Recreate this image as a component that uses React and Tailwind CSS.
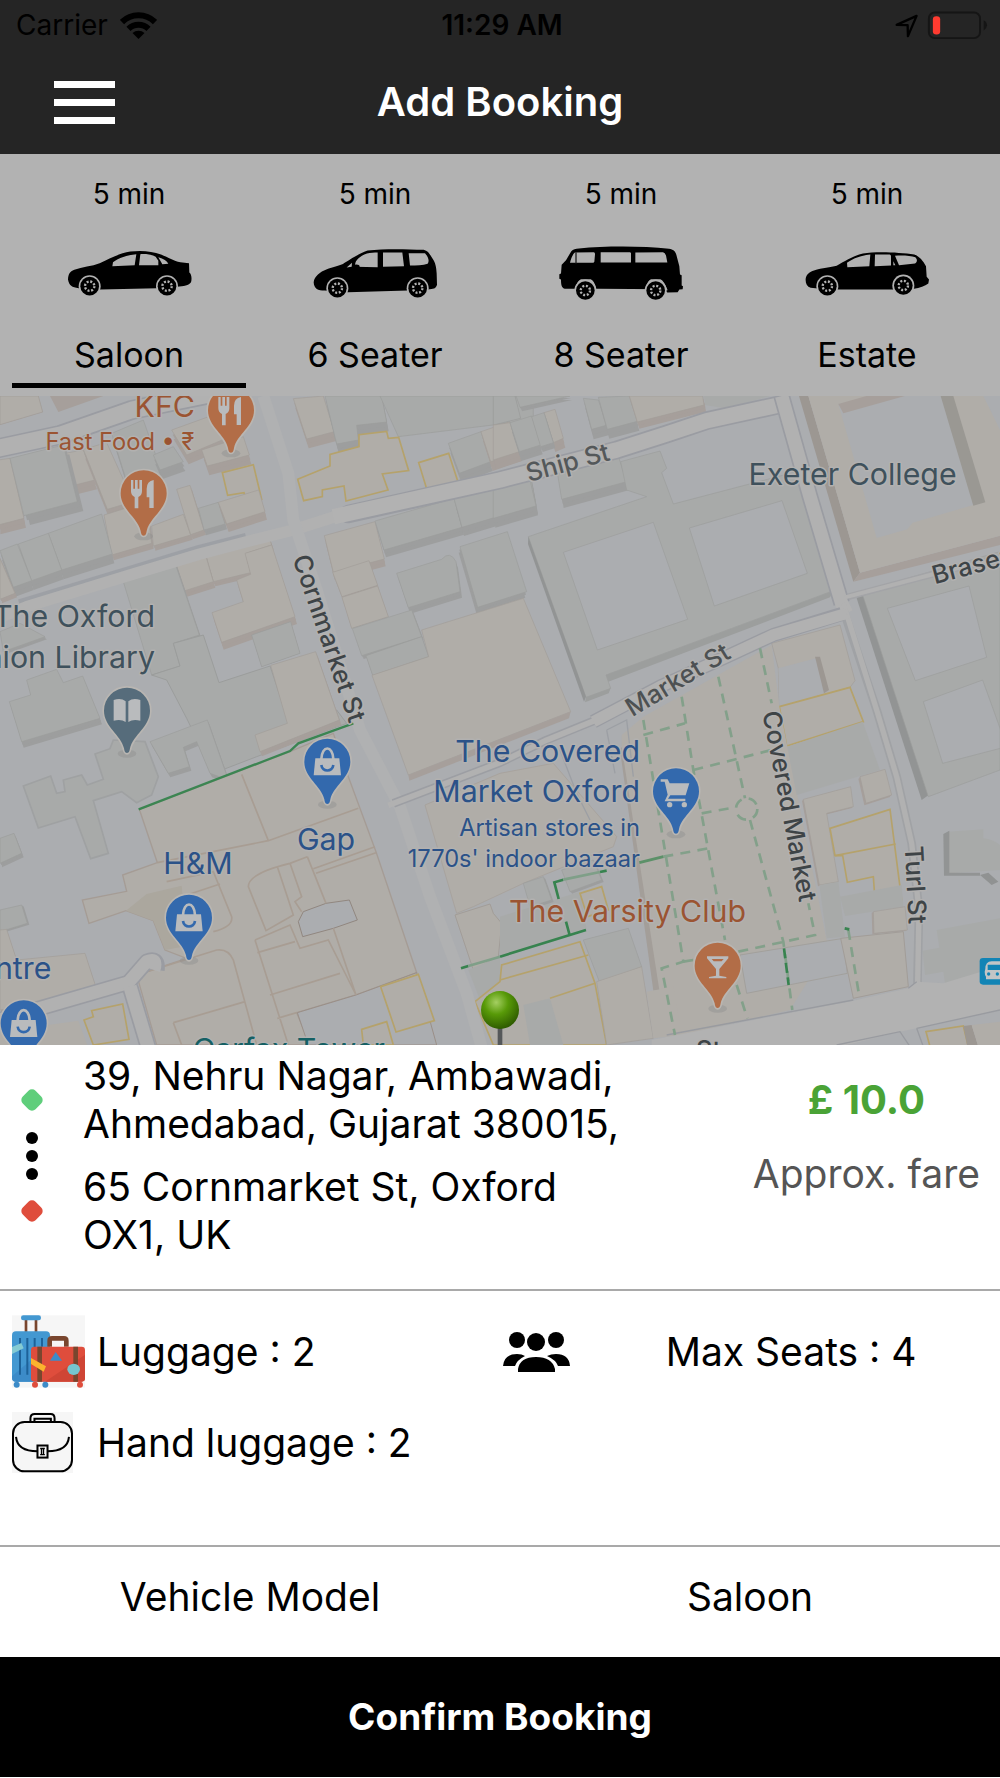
import React, { useState } from "react";

const GREY = "#a8aaa9";
const BEIGE = "#b0ada8";
const GROUND = "#abadb0";

/* ---------- vehicles ---------- */

function Wheel({ x, y }) {
  return (
    <g>
      <circle cx={x} cy={y} r="33" fill="#b2b2b2" />
      <circle cx={x} cy={y} r="28" fill="#000" />
      <circle cx={x} cy={y} r="14" fill="none" stroke="#b2b2b2" strokeWidth="7" strokeDasharray="6 5" />
    </g>
  );
}

const GLASS = "#b2b2b2";

function SaloonCar() {
  return (
    <svg viewBox="200 255 375 170" className="h-[57px] w-[125px]" aria-hidden="true">
      <path d="M203 358C204 342 208 334 222 329C245 320 275 318 298 309C325 298 355 279 390 274C425 270 455 273 482 283C505 292 520 303 540 306L566 309L567 337C574 342 575 357 572 366C566 376 550 377 530 380L470 384L300 388L235 384C215 382 206 376 203 358Z" />
      <path d="M336 318L338 306C355 293 380 284 408 282L403 315ZM416 315L420 282C440 281 455 284 466 290L474 302L474 315ZM474 291C490 296 500 302 504 311L486 312Z" fill={GLASS} />
      <Wheel x="268" y="378" />
      <Wheel x="500" y="378" />
    </svg>
  );
}

function SixSeater() {
  return (
    <svg viewBox="940 255 375 170" className="h-[57px] w-[125px]" aria-hidden="true">
      <path d="M942 366C944 348 962 335 980 328C1000 320 1022 318 1035 308C1060 292 1085 277 1104 271C1155 265 1220 267 1272 269C1286 272 1291 284 1298 294C1308 308 1310 322 1311 340L1312 374C1309 386 1300 387 1285 388L1225 391L1045 396L975 391C955 391 943 386 942 366Z" />
      <path d="M1067 320C1062 300 1085 286 1102 280C1112 277 1124 277 1134 277L1134 321ZM1041 322L1057 308L1056 320ZM1150 277L1208 277L1213 318L1150 320ZM1227 279L1276 279C1286 290 1290 303 1284 311C1270 316 1250 316 1231 316Z" fill={GLASS} />
      <ellipse cx="1070" cy="320" rx="10" ry="7" />
      <Wheel x="1013" y="384" />
      <Wheel x="1254" y="384" />
    </svg>
  );
}

function EightSeater() {
  return (
    <svg viewBox="180 255 375 170" className="h-[57px] w-[125px]" aria-hidden="true">
      <path d="M181 342L186 340L188 314L201 300L217 273C222 267 230 266 240 265C320 257 430 257 510 266C523 268 528 272 532 284L541 318L543 343L548 345L548 376L552 378L551 387L541 388L536 396L505 397L495 387L300 386L198 386C188 383 186 375 186 358L181 356Z" />
      <path d="M213 308C216 294 222 281 228 277L284 276Q289 277 288 283L286 305Q286 308 281 308ZM305 276H393Q397 277 396 282V307H305ZM409 277L492 276Q498 277 501 286L505 307H409Z" fill={GLASS} />
      <path d="M231 276V310" stroke="#222" strokeWidth="4" />
      <path d="M228 385Q236 360 246 357H275Q285 360 292 385ZM440 385Q446 360 456 357H484Q494 360 506 390Z" fill={GLASS} />
      <Wheel x="259" y="391" />
      <Wheel x="470" y="391" />
    </svg>
  );
}

function EstateCar() {
  return (
    <svg viewBox="918 255 375 170" className="h-[57px] w-[125px]" aria-hidden="true">
      <path d="M920 356C922 342 932 335 945 331C970 323 995 322 1013 317C1035 304 1065 286 1092 280C1130 273 1200 276 1246 283C1262 289 1272 302 1281 318L1283 350L1290 358L1288 370C1278 378 1262 383 1245 386L1200 388H985L935 383C924 380 919 370 920 356Z" />
      <path d="M1045 321L1044 308C1062 294 1090 285 1114 283L1111 318ZM1128 283H1172Q1176 284 1176 288V316L1127 318ZM1188 287C1210 285 1235 287 1249 291C1256 298 1255 306 1248 310L1200 315ZM1183 303L1189 315H1183Z" fill={GLASS} />
      <Wheel x="985" y="378" />
      <Wheel x="1213" y="376" />
    </svg>
  );
}

const VEHICLES = [
  { name: "Saloon", Icon: SaloonCar },
  { name: "6 Seater", Icon: SixSeater },
  { name: "8 Seater", Icon: EightSeater },
  { name: "Estate", Icon: EstateCar },
];

/* ---------- map ---------- */

// A building: roof polygon plus a darker extruded side.
function Block({ d, c = GREY, dx = 6, dy = 28 }) {
  const side = c === GREY ? "#9d9e9e" : "#a69f9b";
  return (
    <g>
      <path d={d} transform={`translate(${dx} ${dy})`} fill={side} />
      <path d={d} transform={`translate(${dx / 2} ${dy / 2})`} fill={side} />
      <path d={d} fill={c} stroke={c === GREY ? "#9b9d9c" : "#a29d98"} strokeWidth="2" />
    </g>
  );
}

function Shop({ d }) {
  return <path d={d} fill={BEIGE} stroke="#b5a26b" strokeWidth="5" />;
}

function Pin({ x, y, color, children }) {
  return (
    <g transform={`translate(${x} ${y})`}>
      <ellipse cx="0" cy="2" rx="28" ry="12" fill="#8c8c8c" opacity="0.4" />
      <path
        d="M0 0C-7 0-8-8-9-14C-18-55-69-78-69-127A69 69 0 1 1 69-127C69-78 18-55 9-14C8-8 7 0 0 0Z"
        fill={color}
        stroke="#b9b6b2"
        strokeWidth="10"
        paintOrder="stroke"
      />
      <g transform="translate(0 -127)" fill="#b9bbbd">{children}</g>
    </g>
  );
}

const Fork = () => (
  <g>
    <path d="M-38-40h7v26h5v-26h8v26h5v-26h8v34q0 12-11 17v34h-11V11q-11-5-11-17z" />
    <path d="M30-40v84H17V12H9V-14q0-22 21-26z" />
  </g>
);

const Bag = () => (
  <g>
    <path d="M-36-10H36L41 41H-41Z" />
    <path d="M-18-8C-16-50 16-50 18-8" fill="none" stroke="#b9bbbd" strokeWidth="8" />
    <path d="M-18 10C-15 32 15 32 18 10" fill="none" stroke="#3369ad" strokeWidth="8" />
  </g>
);

const Label = ({ x, y, size = 91, weight = 400, fill = "#2b5288", anchor = "end", rotate = 0, children }) => (
  <text
    x={x}
    y={y}
    fontSize={size}
    fontWeight={weight}
    fill={fill}
    textAnchor={anchor}
    transform={`rotate(${rotate} ${x} ${y})`}
    stroke="#b2b1b0"
    strokeWidth="9"
    strokeLinejoin="round"
    paintOrder="stroke"
  >
    {children}
  </text>
);

const Street = (props) => <Label size={76} weight={500} anchor="start" fill="#3e4447" {...props} />;

function CityMap() {
  return (
    <svg
      viewBox="0 18 3000 1947"
      preserveAspectRatio="xMidYMid slice"
      className="block h-[649px] w-full"
      role="img"
      aria-label="Map of Oxford city centre"
    >
      <defs>
        <radialGradient id="ball" cx="0.4" cy="0.3" r="0.7">
          <stop offset="0" stopColor="#a5cf62" />
          <stop offset="0.45" stopColor="#589a08" />
          <stop offset="1" stopColor="#2f5c00" />
        </radialGradient>
      </defs>
      <rect x="-500" y="-500" width="4000" height="3000" fill={GROUND} />

      {/* north-west */}
      <Block c={BEIGE} d="M0 18H115L128 66L0 104Z" dy={0} dx={0} />
      <path d="M150 18H310L175 66Z" fill="#a69f9b" />
      <Block c={BEIGE} d="M-5 210L30 205L72 385L-5 405Z" />
      <Block c={BEIGE} d="M195 190L250 180L285 270L225 285Z" />
      <Block d="M30 205L190 165L232 335L72 377Z" dx={18} />
      <Block c={BEIGE} d="M250 178L320 158L400 335L322 358Z" />
      <Block d="M335 130L430 90L490 260L385 290Z" />
      <Block d="M460 195L520 170L550 215L480 240Z" />
      <Block c={BEIGE} d="M515 120L640 75L690 140L560 195Z" />
      <Block c={BEIGE} d="M605 180L730 140L748 195L622 228Z" />
      <Shop d="M667 248L760 224L785 328L740 340L732 308L683 316Z" />
      <Block c={BEIGE} d="M312 375L440 335L455 460L335 495Z" dy={16} />
      <Block c={BEIGE} d="M455 408L550 373L572 435L460 468Z" dy={14} />
      <Block c={BEIGE} d="M530 298L570 286L612 420L572 434Z" dy={14} />
      <Block d="M595 355L655 337L675 402L612 420Z" dy={16} />
      <Block c={BEIGE} d="M655 337L776 300L795 365L680 402Z" dy={24} />
      <Block d="M145 430L305 372L337 492L185 540Z" />
      <Block d="M55 462L145 430L185 540L95 572Z" />
      <Block d="M0 482L52 462L95 572L40 592Z" />
      <Block c={BEIGE} d="M0 505L45 610L0 628Z" dy={12} />

      {/* north centre */}
      <Block c={BEIGE} d="M880 26L970 18L1003 125L920 147Z" />
      <Block d="M975 18H1145L1160 96L1070 106L1075 150L1010 162Z" />
      <path d="M1140 18H1600V90L1195 140Z" fill={GREY} stroke="#9b9d9c" strokeWidth="2" />
      <Shop d="M893 268L990 228V193L1077 170V134L1160 124L1165 145L1196 142L1226 242L1147 252L1164 300L1038 333L1032 288L967 300V320L911 332Z" />
      <Block d="M1345 160L1443 125L1472 215L1378 250Z" />
      <Block c={BEIGE} d="M1443 125L1530 95L1560 185L1472 215Z" />
      <Shop d="M1256 218L1346 190L1376 282L1284 310Z" />

      {/* south of Ship Street */}
      <Block c={BEIGE} d="M973 437L1125 395L1153 507L1000 547Z" dx={4} dy={22} />
      <Block d="M1125 393L1362 325L1386 412L1152 480Z" dy={22} />
      <Block d="M1362 325L1592 258L1608 345L1386 412Z" dy={26} />
      <Block c={BEIGE} d="M998 547L1107 512L1133 586L1026 620Z" dx={3} dy={10} />
      <Block c={BEIGE} d="M1026 622L1133 588L1165 680L1055 715Z" dx={0} dy={0} />
      <Block d="M1190 550L1325 508Q1350 480 1368 515L1380 605L1225 653Z" dy={18} />
      <Block d="M1380 470L1522 425L1580 605L1433 652Z" dx={-4} dy={18} />
      <Block d="M1057 716L1235 660L1265 740L1085 797Z" dy={10} />
      <Block d="M1098 797L1265 740L1286 800L1118 856Z" dx={0} dy={0} />
      <path d="M1265 720L1570 625L1712 965L1225 1155L1116 856L1286 800Z" fill={BEIGE} stroke="#a29d98" strokeWidth="2" />
      <path d="M1225 1155L1712 965L1707 985L1228 1172Z" fill="#a69f9b" />

      {/* library area */}
      <Block c={BEIGE} d="M615 485L802 427L815 465L738 490L752 548L722 555L640 575Z" dy={14} />
      <Block c={BEIGE} d="M527 520L615 490L640 575L555 602Z" dy={18} />
      <Block c={BEIGE} d="M735 490L815 465L885 680L665 757L636 668L730 635L710 570L752 553Z" dy={22} />
      <Block d="M370 575L527 525L598 735L520 760L540 828L455 855Z" dx={4} dy={4} />
      <Block d="M755 735L872 695L900 790L785 830Z" dx={0} dy={0} />
      <path d="M520 760L610 735L657 878L810 828L862 985L1010 960L1040 1000L770 1100L640 1150L560 985L500 870L455 855L540 828Z" fill={GREY} stroke="#9b9d9c" strokeWidth="3" />
      <Block c={BEIGE} d="M812 826L947 785L1018 990L780 1085L765 1035L862 1000Z" dy={14} />
      <Block d="M80 870L170 838L190 878L248 858L300 985L65 1055L28 935L92 915Z" dy={18} />
      <Block d="M0 725L60 700L135 740L10 785Z" dy={8} />
      <path d="M285 1092L330 1076L340 1050L435 1055L475 1160L455 1215L410 1238L365 1205L280 1232L325 1390L272 1406L225 1280L115 1314L70 1188L152 1158L170 1210L195 1205L190 1170L245 1155L262 1185L310 1168Z" fill={GREY} stroke="#9fa1a2" strokeWidth="5" />
      <Block d="M450 1055L622 990L685 1170L630 1150L590 1055L550 1072L568 1130L505 1150Z" dy={12} />
      <Block d="M0 1345L42 1330L65 1390L0 1420Z" dy={12} />
      <Block d="M0 1560L65 1545L82 1600L0 1625Z" dy={4} />
      <Block c={BEIGE} d="M0 1620L20 1618L50 1710L255 1690L290 1798L75 1850L0 1860Z" dy={20} />

      {/* shopping centre block */}
      <path
        d="M418 1258L870 1085L1000 1030L1045 1160L1128 1385L1250 1748L1068 1815L890 1868L930 1965H470L410 1755L560 1705L495 1680L460 1592L378 1562L267 1600L247 1530L380 1504L368 1455L472 1418Z"
        fill={BEIGE}
        stroke="#a59c95"
        strokeWidth="4"
      />
      <path d="M378 1562L440 1512L545 1487L555 1600L560 1668L495 1680L460 1592Z" fill="#aba79e" />
      <path d="M895 1595L910 1565L978 1540L1048 1530L1072 1590L1000 1615L908 1640Z" fill={GROUND} stroke="#918780" strokeWidth="3" />
      <path d="M892 1868L1068 1815L1250 1748L1310 1965H925Z" fill={GROUND} stroke="#9a8f88" strokeWidth="3" />
      <path
        d="M472 1418L805 1352L1075 1255M725 1153L805 1352M922 1400L870 1420Q745 1450 745 1490L798 1622L880 1575L862 1520L832 1430M870 1420L905 1520L885 1535L905 1565M940 1436L1125 1370M948 1450L1128 1388M922 1400L978 1540M500 1475L640 1445L695 1580Q700 1610 640 1625M545 1520L660 1482M765 1650L870 1605L900 1675L985 1650L1068 1815M765 1650L865 1965M772 1688L885 1655M810 1815L1020 1750M832 1885L890 1868M410 1755L650 1680Q685 1675 700 1710L770 1965M520 1898L735 1835M520 1898L545 1965M1000 1615L1068 1815"
        fill="none"
        stroke="#a89d93"
        strokeWidth="5"
      />
      <Shop d="M1142 1790L1255 1753L1303 1892L1188 1926Z" />
      <Shop d="M1085 1918L1160 1895L1180 1965H1090Z" />
      <Shop d="M252 1890L280 1880L275 1862L368 1842L387 1948L280 1965Z" />
      <path d="M0 1965V1925L235 1892L262 1965Z" fill={BEIGE} />

      {/* north-east */}
      <g transform="translate(1500 0)">
        <Block d="M-20 18H45L62 85L-20 105Z" dy={0} dx={0} />
        <Block d="M48 18H210L60 52Z" dy={12} />
        <Block c={BEIGE} d="M-20 105L30 98L58 185L-20 210Z" />
        <Block d="M30 98L95 78L122 165L58 185Z" />
        <Block c={BEIGE} d="M132 68L165 58L190 145L160 158Z" />
        <Block d="M95 80L132 68L160 158L122 170Z" dy={16} />
        <Block d="M250 25L295 30L322 105L275 118Z" dy={30} />
        <Block d="M295 22L388 18L412 94L322 118Z" />
        <Block c={BEIGE} d="M388 18H608L612 45L412 96Z" dy={20} />
        <path d="M612 18H810L675 55L615 45Z" fill={GREY} />
        <Block d="M-20 300L90 270L108 348L-20 385Z" />
        <Block d="M170 235L350 183L380 275L185 328Z" dy={26} />
        <path
          fillRule="evenodd"
          d="M85 440L440 320L380 300L362 215L480 183L500 235L485 248L520 342L890 245L1000 602L318 855L332 895L258 922ZM190 487L460 397L563 688L292 780ZM568 414L846 332L922 550L643 648Z"
          fill={GREY}
          stroke="#9b9d9c"
          strokeWidth="2"
        />
        <path d="M85 440L258 920L252 935L84 462Z" fill="#929494" />
        <path d="M318 855L1000 602L990 622L325 875ZM258 922L332 895L326 910L255 937Z" fill="#9c9e9d" />
        <path d="M897 18L1060 575L1080 548L925 18Z" fill="#9c9792" />
        <path d="M1060 575L1080 548L1500 437V465Z" fill="#a69f9b" />
        <path
          fillRule="evenodd"
          d="M925 18H1500V437L1080 548ZM1015 42L1210 0H1322L1420 345L1238 398L1222 418L1130 444Z"
          fill={BEIGE}
        />
        <path d="M1322 18H1360L1456 337L1420 347Z" fill="#9a9893" />
        <path d="M1015 42L1110 15H1225L1030 70Z" fill="#a69f9b" />
        <path d="M1450 18H1500V120Z" fill={GROUND} />
        <path d="M1070 625L1085 605L1300 1205L1265 1230Z" fill="#929494" />
        <path
          fillRule="evenodd"
          d="M1085 605L1500 485V1140L1285 1220ZM1162 655L1407 588L1460 802L1246 872ZM1270 935L1448 870L1520 1070L1328 1120Z"
          fill={GREY}
          stroke="#9b9d9c"
          strokeWidth="2"
        />
        <path d="M815 760L1020 705L1065 872L1050 892L838 950L835 835Z" fill={BEIGE} stroke="#a29d98" strokeWidth="2" />
        <path d="M835 835L948 805L985 905L838 950Z" fill={GROUND} />
        <path d="M945 800L960 800L987 900L972 910Z" fill="#9c9792" />
        <path d="M838 950L1050 892L1090 995L860 1068Z" fill={BEIGE} stroke="#b5a26b" strokeWidth="5" />
      </g>

      {/* covered market and south-east */}
      <g transform="translate(1500 960)">
        <path d="M365 75L430 20L815 -195L838 -10L985 715L870 900L545 975L470 870L365 110Z" fill={BEIGE} />
        <path d="M365 110L478 840L460 842L360 120Z" fill="#a39e99" />
        <path d="M720 735L1030 685L1042 790L740 850Z" fill={GROUND} stroke="#a2a09c" strokeWidth="3" />
        <path d="M862 110L1088 35L1140 180L890 255Z" fill={GREY} />
        <Block c={BEIGE} d="M1080 200L1155 178L1175 255L1098 280Z" dx={-5} dy={6} />
        <Block c={BEIGE} d="M910 268L1052 230L1060 290L980 310L1015 515L958 525Z" dx={-4} dy={4} />
        <Shop d="M990 355L1170 298L1205 570H1125L1120 500L1042 517L1028 437L1005 437Z" />
        <path d="M1005 437L1187 402" stroke="#b5a26b" strokeWidth="5" />
        <path d="M1020 560L1205 525L1210 590L1035 618Z" fill={GREY} />
        <path d="M958 525L1015 515L1035 680L980 685Z" fill={GREY} />
        <Block c={BEIGE} d="M1120 605L1215 590L1222 660L1122 670Z" dx={-5} dy={3} />
        <path d="M1022 685L1210 665L1225 830L1060 865Z" fill={BEIGE} stroke="#a29d98" strokeWidth="3" />
        <path d="M1345 365L1450 358V385Q1480 388 1500 405V480L1345 490Z" fill={GREY} />
        <path d="M1330 372L1348 362V488H1440V497H1332Z" fill="#929494" />
        <path d="M1440 495L1465 488L1495 515L1475 525Z" fill="#909292" />
        <path d="M1310 660L1500 625V780L1335 820L1330 785L1275 795L1268 722L1318 713Z" fill={GREY} />

        {/* west of the market */}
        <path d="M-225 285L0 190L160 160L350 380L340 410L70 520L-80 590L-130 610Z" fill={BEIGE} stroke="#a8a39e" strokeWidth="3" />
        <path d="M-135 615L-30 582L-20 610L5 640L-5 740L-80 780Z" fill={BEIGE} stroke="#a29d98" strokeWidth="3" />
        <path d="M0 620L240 545L260 660L0 740Z" fill={GREY} />
        <Block d="M70 520L130 500L155 570L90 590Z" dy={6} />
        <Block d="M185 480L280 450L305 510L210 545Z" dy={6} />
        <Shop d="M240 550L305 530L325 600L262 620Z" />
        <path d="M250 690L385 655L425 770L300 820Z" fill={GREY} stroke="#9b9d9c" strokeWidth="2" />
        <path d="M-95 780L0 740L0 870L-60 870Z" fill={GREY} />
        <Shop d="M-75 875L0 815L5 765L240 695L285 820L320 1005H-20Z" />
        <path d="M0 810L265 735M150 865L285 820" stroke="#b5a26b" strokeWidth="5" />
        <path d="M70 885L150 865L190 1005H90Z" fill={GREY} />
        <path d="M290 815L425 770L460 985L320 1005Z" fill={BEIGE} stroke="#a29d98" strokeWidth="2" />
        <path d="M440 845L520 830L545 975L460 985Z" fill={BEIGE} />
      </g>

      {/* roads */}
      <g fill="none" strokeLinejoin="round">
        <path d="M-30 180L180 135L395 60L640 10" stroke="#9a9ca2" strokeWidth="60" />
        <path d="M-30 180L180 135L395 60L640 10" stroke="#b1b1b1" strokeWidth="50" />
        <path d="M60 648L400 545L600 484L740 448" stroke="#9a9ca2" strokeWidth="40" opacity="0.8" />
        <path d="M-20 690L80 650L400 552L600 492L760 450L880 420L1030 372" stroke="#b1b1b1" strokeWidth="34" />
        <path d="M1045 372L1500 270L1850 180L2000 132L2120 92L2340 44" stroke="#9a9ca2" strokeWidth="56" strokeLinecap="round" />
        <path d="M1000 380L1500 270L1850 180L2000 132L2120 92L2340 44" stroke="#b2b2b2" strokeWidth="46" />
        <path d="M790 18L865 250L880 390L950 600L1080 1020L1200 1250L1290 1520L1400 1810L1450 1990" stroke="#b0b1b2" strokeWidth="36" />
        <path d="M2345 18L2430 320L2525 640" stroke="#9a9ca2" strokeWidth="50" />
        <path d="M2345 18L2430 320L2525 640L2540 670" stroke="#b1b1b1" strokeWidth="40" />
        <path d="M2530 660L2630 960L2690 1160L2735 1360L2757 1560L2752 1790" stroke="#a0a2a5" strokeWidth="26" />
        <path d="M2530 640L2630 960L2690 1160L2735 1360L2757 1560L2752 1830" stroke="#b1b1b1" strokeWidth="16" />
        <path d="M1800 985L1640 1050L1500 1118L1180 1240" stroke="#9c9ea3" strokeWidth="26" />
        <path d="M2525 672L2320 735L2180 800L1980 890L1780 995" stroke="#9a9ca2" strokeWidth="42" />
        <path d="M1800 985L1640 1050L1500 1118L1165 1246" stroke="#b1b1b1" strokeWidth="17" />
        <path d="M2540 670L2320 735L2180 800L1980 890L1780 995" stroke="#b1b1b1" strokeWidth="34" />
        <path d="M2545 620L2790 555L3010 500" stroke="#a3a4a7" strokeWidth="20" />
        <path d="M2535 622L2790 555L3010 500" stroke="#b1b1b1" strokeWidth="12" />
        <path d="M-20 1895L385 1778L440 1715Q475 1700 470 1740" stroke="#9a9ca2" strokeWidth="48" />
        <path d="M390 1790L450 1990" stroke="#9a9ca2" strokeWidth="50" />
        <path d="M-20 1895L385 1778L440 1715Q475 1700 462 1740" stroke="#b1b1b1" strokeWidth="38" />
        <path d="M390 1790L450 1990" stroke="#b1b1b1" strokeWidth="40" />
      </g>
      <g transform="translate(1500 960)">
        <path d="M455 990L1060 872L1225 835L1250 815L1330 820L1510 765V900L1200 965L1000 1015H455Z" fill="#b2b2b2" />
        <path d="M500 975L1060 870M1225 835L1250 815M1010 1005L1200 965L1230 1010M1250 955L1500 900M1250 955L1270 1010" stroke="#999ba0" strokeWidth="4" fill="none" />
        <path d="M320 60L380 30L400 200M320 60L345 190M180 120L230 250L270 330" stroke="#9c9fa4" strokeWidth="4" fill="none" />
        <Shop d="M1278 965L1390 948L1405 1010H1290Z" />
        <path d="M1390 948L1415 945L1435 1010H1402Z" fill="#9c9792" />
        <path d="M1415 945L1500 935V1010H1435Z" fill={BEIGE} />

        {/* arcades */}
        <g fill="none" stroke="#83a08a" strokeWidth="8" strokeDasharray="30 22">
          <path d="M430 30L550 755L485 775L525 975" />
          <path d="M545 -40L580 180L675 690" />
          <path d="M655 -100L735 265" />
          <path d="M780 -185L815 -20" />
          <path d="M750 330L850 695L877 900" />
          <path d="M430 75L555 40M580 180L815 120M605 310L705 292M490 440L625 415M715 725L945 675L925 580M550 755L580 750M1045 660L1078 860M710 825L742 925" />
          <circle cx="740" cy="297" r="32" />
        </g>
        <g fill="none" stroke="#37834f" strokeWidth="8">
          <path d="M0 740L258 660M208 672L198 635M176 567L163 517L190 509M300 486L320 482M-117 775L-95 768" />
          <path d="M-95 768L0 740M190 509L300 486" stroke="#7f9f88" />
          <path d="M418 458L490 440" stroke="#5c9169" />
          <path d="M852 715L866 825" strokeDasharray="30 14" />
          <path d="M1034 655L1048 658" />
        </g>
      </g>
      <path d="M416 1258L870 1083L895 1060L1000 1022L1060 1000" fill="none" stroke="#3c8552" strokeWidth="7" />

      {/* labels */}
      <Label x={585} y={81} fill="#9b5432">KFC</Label>
      <Label x={583} y={181} size={71} fill="#9b5432">Fast Food • ₹</Label>
      <Label x={465} y={712} fill="#3f515c">The Oxford</Label>
      <Label x={465} y={833} fill="#3f515c">Union Library</Label>
      <Label x={2870} y={284} fill="#3f515c">Exeter College</Label>
      <Label x={1920} y={1115}>The Covered</Label>
      <Label x={1920} y={1236}>Market Oxford</Label>
      <Label x={1920} y={1337} size={71}>Artisan stores in</Label>
      <Label x={1920} y={1431} size={71}>1770s' indoor bazaar</Label>
      <Label x={978} y={1380} anchor="middle">Gap</Label>
      <Label x={594} y={1451} anchor="middle">H&amp;M</Label>
      <Label x={154} y={1768}>Centre</Label>
      <Label x={2238} y={1597} fill="#9b5432">The Varsity Club</Label>
      <Label x={1155} y={2011} fill="#156064">Carfax Tower</Label>
      <Street x={1586} y={276} rotate={-15} fill="#54585a">Ship St</Street>
      <Street x={1897} y={982} rotate={-31} fill="#4d5153">Market St</Street>
      <Street x={2804} y={583} rotate={-15}>Brasenose Ln</Street>
      <Street x={877} y={505} rotate={71}>Cornmarket St</Street>
      <Street x={2287} y={968} rotate={79}>Covered Market</Street>
      <Street x={2714} y={1369} rotate={87}>Turl St</Street>
      <Label x={2163} y={2008} size={76} weight={500} fill="#3e4447">St</Label>

      {/* pins */}
      <Pin x={693} y={188} color="#b26d47"><Fork /></Pin>
      <Pin x={431} y={437} color="#b26d47"><Fork /></Pin>
      <Pin x={381} y={1089} color="#566c7b">
        <path d="M-40-32Q-18-40-4-28V34Q-18 24-40 30ZM40-32Q18-40 4-28V34Q18 24 40 30Z" />
      </Pin>
      <Pin x={982} y={1242} color="#3369ad"><Bag /></Pin>
      <Pin x={567} y={1710} color="#3369ad"><Bag /></Pin>
      <Pin x={71} y={2027} color="#3369ad"><Bag /></Pin>
      <Pin x={2028} y={1331} color="#3369ad">
        <path d="M-46-36H-25L-19-24H40L29 12H-17L-24 22H28V30H-34L-25 10L-34-29H-46Z" />
        <circle cx="-19" cy="40" r="8" />
        <circle cx="25" cy="40" r="8" />
      </Pin>
      <Pin x={2153} y={1854} color="#b26d47">
        <path d="M-32-28H32V-22L5 10V30L26 34V38H-26V34L-5 30V10L-32-22ZM-18-20L-12-13H12L18-20Z" fillRule="evenodd" />
      </Pin>
      <g>
        <rect x="2939" y="1704" width="90" height="80" rx="10" fill="#1284b5" />
        <path fillRule="evenodd" d="M2956 1737Q2956 1714 2975 1714H3010V1768H2958V1760Q2954 1755 2954 1745ZM2963 1724V1740H3010V1724Z" fill="#c2c5c6" />
        <circle cx="2966" cy="1752" r="5" fill="#1284b5" />
        <circle cx="2992" cy="1752" r="5" fill="#1284b5" />
      </g>
      <rect x="1493" y="1910" width="14" height="60" fill="#55585a" />
      <circle cx="1500" cy="1860" r="57" fill="url(#ball)" />
    </svg>
  );
}

/* ---------- small icons ---------- */

const StatusWifi = () => (
  <svg viewBox="0 0 37 27" className="h-[27px] w-[37px]" aria-hidden="true">
    <path d="M18.500 27L12.500 21A9 9 0 0 1 24.500 21Z" />
    <path d="M8.500 16.800A14.500 14.500 0 0 1 28.500 16.800" fill="none" stroke="#000" strokeWidth="6" />
    <path d="M2 10A23.500 23.500 0 0 1 35 10" fill="none" stroke="#000" strokeWidth="6" />
  </svg>
);

const StatusRight = () => (
  <svg viewBox="45 30 280 86" className="h-[29px] w-[93px]" aria-label="Location on, battery low" role="img">
    <path d="M50 71L110 44L84 105L83 72Z" fill="none" stroke="#000" strokeWidth="7" strokeLinejoin="round" />
    <rect x="147" y="34" width="154" height="77" rx="18" fill="none" stroke="#151515" strokeWidth="6" />
    <rect x="159" y="45" width="22" height="55" rx="10" fill="#ff3b30" />
    <path d="M312 57Q322 63 322 72T312 88Z" fill="#151515" />
  </svg>
);

const Suitcases = () => (
  <svg viewBox="36 32 219 217" className="h-[73px] w-[73px]" aria-hidden="true">
    <rect x="36" y="32" width="219" height="217" fill="#f6f6f6" />
    <path d="M78 46V82M108 46V82" stroke="#79462e" strokeWidth="8" />
    <rect x="63" y="32" width="60" height="15" rx="7" fill="#4398d1" />
    <rect x="36" y="80" width="114" height="151" rx="12" fill="#4398d1" />
    <path d="M36 215L100 160V231H48Q36 231 36 219Z" fill="#3c8bc8" />
    <path d="M60 100V210M82 100V210M104 100V210M126 100V126" stroke="#1d6299" strokeWidth="6" />
    <path d="M36 127L64 115L71 131L36 148Z" fill="#85cbd3" />
    <path d="M149 126V108Q149 101 156 101H192Q199 101 199 108V126" fill="none" stroke="#79462e" strokeWidth="14" />
    <rect x="93" y="126" width="162" height="105" rx="10" fill="#df4d3c" />
    <path d="M135 231L255 150V221Q255 231 245 231Z" fill="#cf4535" />
    <path d="M112 126H126V231H112ZM220 126H234V231H220Z" fill="#79462e" />
    <path d="M93 160L138 185L131 201L93 178Z" fill="#fbb32e" />
    <path d="M167 142L186 168H150Z" fill="#3c8bc8" />
    <ellipse cx="221" cy="194" rx="19" ry="17" fill="#76c5ce" />
    <g fill="#3c8bc8"><circle cx="50" cy="240" r="9" /><circle cx="136" cy="240" r="9" /></g>
    <g fill="#df4d3c"><circle cx="105" cy="240" r="9" /><circle cx="240" cy="240" r="9" /></g>
  </svg>
);

const Briefcase = () => (
  <svg viewBox="36 321 182 182" className="h-[61px] w-[61px]" fill="none" stroke="#000" strokeWidth="6" aria-hidden="true">
    <rect x="36" y="321" width="182" height="182" fill="#f6f6f6" stroke="none" />
    <rect x="39" y="351" width="176" height="147" rx="34" />
    <path d="M91 350V340Q91 327 104 327H151Q163 327 163 340V350M103 350V341H152V350M48 395Q52 438 112 438H142Q202 438 206 395" />
    <rect x="112" y="421" width="30" height="36" fill="#f6f6f6" />
    <path d="M120 430H134M120 448H134M124 430V448M130 430V448" strokeWidth="4" />
  </svg>
);

const People = () => (
  <svg viewBox="503 1333 67 40" className="h-10 w-[67px]" aria-hidden="true">
    <circle cx="517" cy="1341" r="8" />
    <circle cx="556" cy="1341" r="8" />
    <circle cx="536" cy="1343" r="9" />
    <path d="M503 1367Q504 1355 517 1355Q522 1355 525 1357Q517 1361 515 1367ZM570 1367Q569 1355 556 1355Q551 1355 547 1357Q556 1361 558 1367Z" />
    <path d="M518 1373V1370Q520 1358 536 1358T555 1370V1373Z" />
  </svg>
);

/* ---------- screen ---------- */

export default function App() {
  const [selected, setSelected] = useState("Saloon");

  return (
    <div className="flex min-h-screen flex-col bg-white font-['Inter',sans-serif] text-black">
      <header className="bg-[#252525]">
        <div className="grid h-[50px] grid-cols-3 items-center pl-4 pr-3 text-[28px] leading-8">
          <div className="flex items-center gap-3">
            <span>Carrier</span>
            <StatusWifi />
          </div>
          <div className="text-center font-semibold">11:29 AM</div>
          <div className="flex justify-end">
            <StatusRight />
          </div>
        </div>
        <div className="grid h-[104px] grid-cols-[61px_1fr_61px] items-center px-[54px]">
          <button type="button" aria-label="Open menu" className="flex flex-col gap-[11px]">
            <span className="h-[7px] w-full bg-white" />
            <span className="h-[7px] w-full bg-white" />
            <span className="h-[7px] w-full bg-white" />
          </button>
          <h1 className="text-center text-[40px] font-semibold leading-[48px] text-white">Add Booking</h1>
        </div>
      </header>

      <nav className="grid grid-cols-4 gap-3 bg-[#b2b2b2] pb-2 pl-3 pr-4" aria-label="Vehicle type">
        {VEHICLES.map(({ name, Icon }) => (
          <button
            key={name}
            type="button"
            aria-pressed={selected === name}
            onClick={() => setSelected(name)}
            className={`flex flex-col items-center border-b-[5px] pb-2 pt-6 ${
              selected === name ? "border-black" : "border-transparent"
            }`}
          >
            <span className="text-[28px] leading-8">5 min</span>
            <span className="mt-[35px]">
              <Icon />
            </span>
            <span className="mt-[33px] text-[34px] leading-10">{name}</span>
          </button>
        ))}
      </nav>

      <CityMap />

      <main className="text-[39px] leading-[48px]">
        <section className="flex border-b-2 border-[#a9a9a9] pb-[30px] pl-5 pr-5 pt-[7px]">
          <div className="flex w-6 shrink-0 flex-col items-center justify-between py-[39px]" aria-hidden="true">
            <span className="size-[18px] rotate-45 rounded-[5px] bg-[#5fce7b]" />
            <span className="flex flex-col gap-[6px]">
              <span className="size-3 rounded-full bg-black" />
              <span className="size-3 rounded-full bg-black" />
              <span className="size-3 rounded-full bg-black" />
            </span>
            <span className="size-[18px] rotate-45 rounded-[5px] bg-[#df4d3c]" />
          </div>
          <div className="ml-[39px] flex flex-1 flex-col gap-[15px]">
            <p>
              39, Nehru Nagar, Ambawadi,
              <br />
              Ahmedabad, Gujarat 380015,
            </p>
            <p>
              65 Cornmarket St, Oxford
              <br />
              OX1, UK
            </p>
          </div>
          <div className="flex flex-col items-center gap-[26px] pt-6">
            <p className="text-[40px] font-bold text-[#4aa336]">£ 10.0</p>
            <p className="text-[#555555]">Approx. fare</p>
          </div>
        </section>

        <section className="flex flex-col gap-6 border-b-2 border-[#a9a9a9] pb-[72px] pl-3 pt-6">
          <div className="grid grid-cols-[8fr_67px_7fr] items-center">
            <div className="flex items-center gap-3">
              <Suitcases />
              <span>Luggage : 2</span>
            </div>
            <People />
            <span className="pl-3 text-center">Max Seats : 4</span>
          </div>
          <div className="flex items-center gap-6">
            <Briefcase />
            <span>Hand luggage : 2</span>
          </div>
        </section>

        <section className="grid grid-cols-2 pb-9 pt-[26px] text-center">
          <span>Vehicle Model</span>
          <span>{selected}</span>
        </section>
      </main>

      <button type="button" className="h-[120px] w-full bg-black text-[37px] font-bold text-white">
        Confirm Booking
      </button>
    </div>
  );
}
